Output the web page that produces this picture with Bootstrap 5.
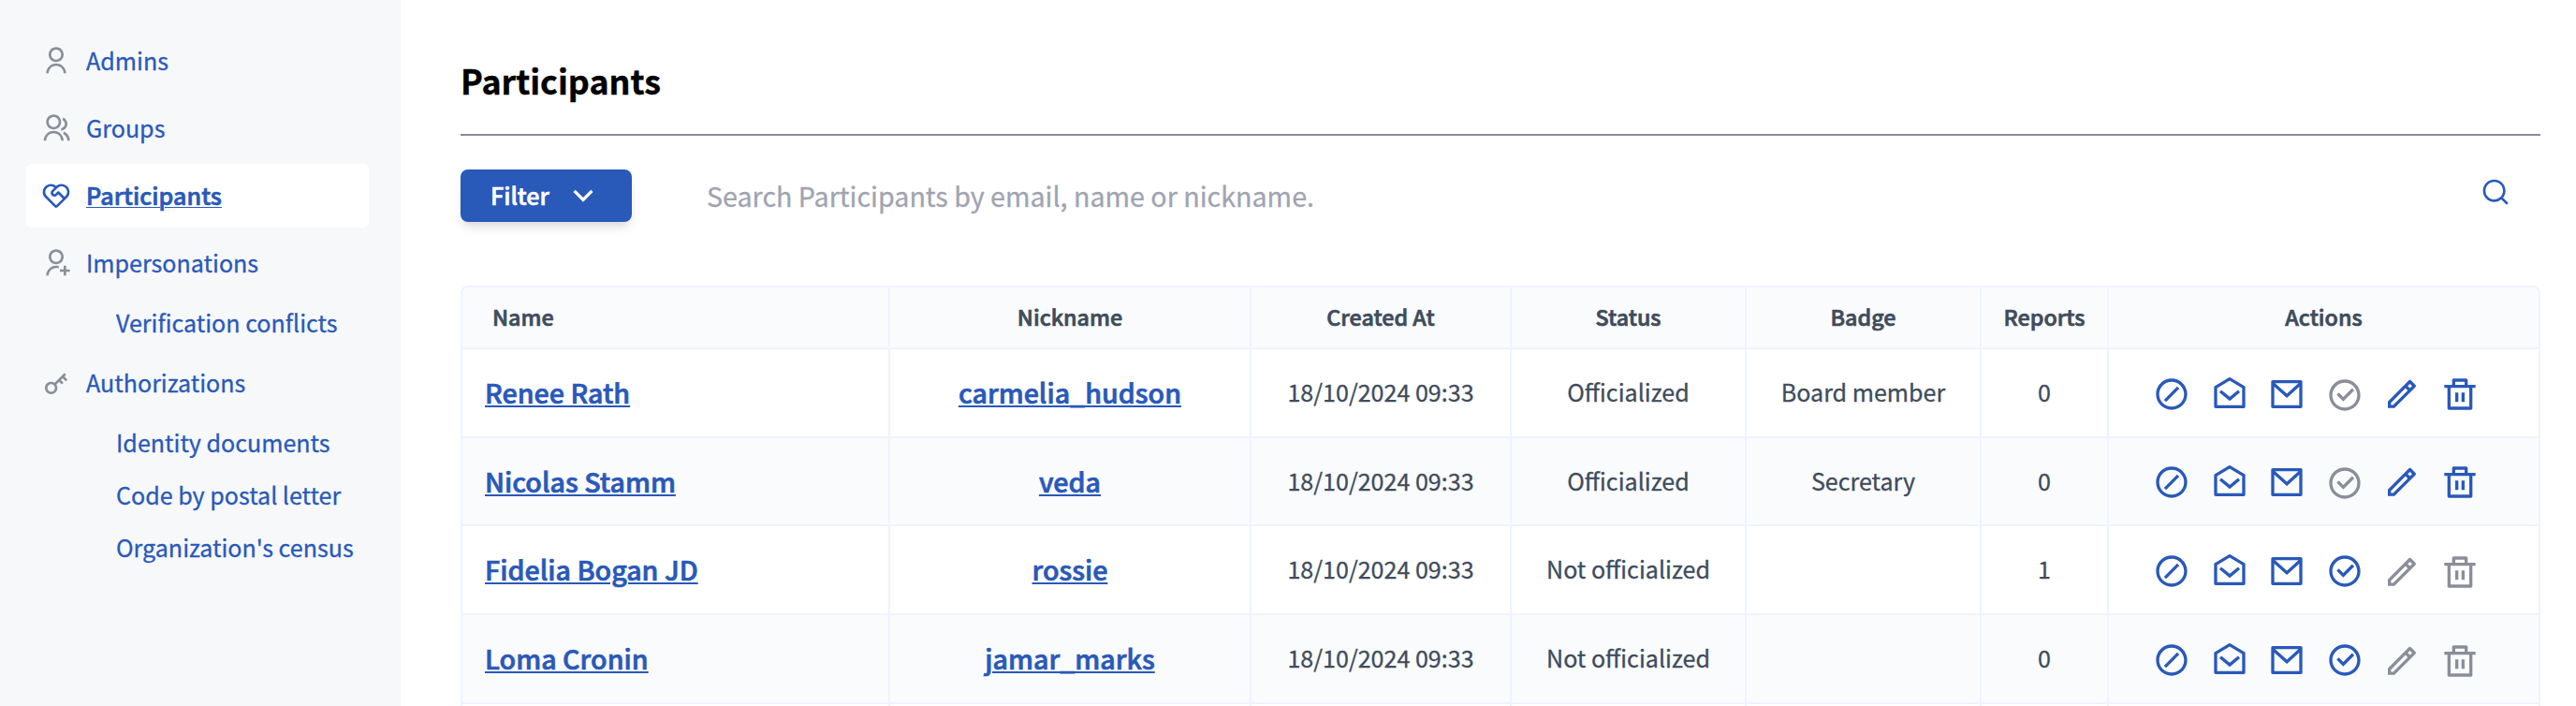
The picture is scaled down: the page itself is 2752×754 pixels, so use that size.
<!DOCTYPE html>
<html lang="en">
<head>
<meta charset="utf-8">
<meta name="viewport" content="width=device-width, initial-scale=1">
<title>Participants</title>
<link rel="stylesheet" href="https://cdn.jsdelivr.net/npm/bootstrap@5.3.0/dist/css/bootstrap.min.css">
<style>
  :root { --primary: #2959b9; --ink: #3e4c5c; --muted: #8a8e99; --line: #eef3ff; --soft: #fafbfd; }
  body { font-family: "Noto Sans CJK SC", "Noto Sans", sans-serif; color: var(--ink); font-size: 25.07px; line-height: 36px; height: 754px; overflow: hidden; -webkit-text-stroke: .3px currentColor; }
  a { color: var(--primary); }
  svg { fill: currentColor; flex: none; -webkit-text-stroke: 0; }
  .sidebar { width: 428px; height: 754px; background: #f7f8fa; padding: 31px 34px 0 28px; }
  .side-link { height: 68px; padding: 0 0 0 16px; gap: 16px; border-radius: 6px; color: var(--primary); text-decoration: none; }
  .side-link span { padding-bottom: 2px; }
  .side-link svg { width: 32px; height: 32px; color: var(--muted); }
  .side-link.active { background: #fff; font-weight: 500; text-decoration: underline; text-decoration-thickness: 1px; text-underline-offset: 2px; letter-spacing: .06px; -webkit-text-stroke-width: .7px; }
  .side-link.active svg { color: var(--primary); }
  .side-sub { height: 56px; padding: 2px 0 0 96px; color: var(--primary); text-decoration: none; white-space: nowrap; }
  main { padding: 0 38px 0 64px; }
  h1 { font-size: 35.8px; font-weight: 700; line-height: 48px; color: #000; padding: 61px 0 34px; margin: 0; border-bottom: 2px solid #868c98; -webkit-text-stroke-width: .4px; }
  .btn-filter { width: 183px; height: 56px; background: var(--primary); color: #fff; border: 0; border-radius: 8px; padding: 0 32px; font-size: 25.07px; font-weight: 500; -webkit-text-stroke: .6px currentColor; box-shadow: 0 8px 12px -2px rgba(0,0,0,.1), 0 4px 8px -4px rgba(0,0,0,.1); }
  .btn-filter span { padding-bottom: 2px; }
  .toolbar { height: 56px; margin-top: 36px; }
  .search-box { margin-left: 48px; border: 0; padding: 3px 32px; font-size: 28.65px; line-height: 40px; -webkit-text-stroke: .3px #9fa4b1; }
  .search-box::placeholder { color: #9fa4b1; opacity: 1; }
  .search-icon { width: 32px; height: 32px; color: var(--primary); margin: -8px 32px 0 0; }
  .people { width: 2222px; margin-top: 68px; border: 2px solid var(--line); border-bottom: 0; border-radius: 8px 8px 0 0; overflow: hidden; }
  .people table { table-layout: fixed; width: 2218px; border-collapse: separate; border-spacing: 0; }
  .people th, .people td { border: 0 solid var(--line); border-width: 0 2px 2px 0; padding: 0; text-align: center; vertical-align: middle; white-space: nowrap; }
  .people th:last-child, .people td:last-child { border-right: 0; }
  .people th { height: 66px; background: var(--soft); font-size: 23.3px; font-weight: 500; -webkit-text-stroke-width: .7px; padding-bottom: 2px; }
  .people td { height: 95px; padding-bottom: 3px; }
  .people td:nth-child(-n+2) { padding-top: 3px; }
  .people tr.mid td { height: 94px; padding-bottom: 2px; }
  .people tbody tr:nth-child(even) td { background: var(--soft); }
  .people tbody tr.next td { height: 2px; padding: 0; border-bottom: 0; }
  .people th:first-child { text-align: left; padding-left: 32px; }
  .people td:first-child { text-align: left; padding-left: 24px; }
  .people td > a { font-size: 28.65px; font-weight: 500; -webkit-text-stroke-width: .7px; text-decoration-thickness: 2px; text-underline-offset: 2px; }
  .acts { gap: 21.6px; color: var(--primary); padding: 6px 0 0 47px; }
  .mid .acts { padding-top: 4px; }
  .acts svg { width: 40px; height: 40px; }
  .acts .off { color: var(--muted); margin: 1px 0 -1px; }
</style>
</head>
<body>
<svg class="d-none">
  <symbol id="user" viewBox="0 0 24 24"><path d="M4 22C4 17.5817 7.58172 14 12 14C16.4183 14 20 17.5817 20 22H18C18 18.6863 15.3137 16 12 16C8.68629 16 6 18.6863 6 22H4ZM12 13C8.685 13 6 10.315 6 7C6 3.685 8.685 1 12 1C15.315 1 18 3.685 18 7C18 10.315 15.315 13 12 13ZM12 11C14.21 11 16 9.21 16 7C16 4.79 14.21 3 12 3C9.79 3 8 4.79 8 7C8 9.21 9.79 11 12 11Z"/></symbol>
  <symbol id="group" viewBox="0 0 24 24"><path d="M2 22C2 17.5817 5.58172 14 10 14C14.4183 14 18 17.5817 18 22H16C16 18.6863 13.3137 16 10 16C6.68629 16 4 18.6863 4 22H2ZM10 13C6.685 13 4 10.315 4 7C4 3.685 6.685 1 10 1C13.315 1 16 3.685 16 7C16 10.315 13.315 13 10 13ZM10 11C12.21 11 14 9.21 14 7C14 4.79 12.21 3 10 3C7.79 3 6 4.79 6 7C6 9.21 7.79 11 10 11ZM18.2837 14.7028C21.0644 15.9561 23 18.752 23 22H21C21 19.564 19.5483 17.4671 17.4628 16.5271L18.2837 14.7028ZM17.5962 3.41321C19.5944 4.23703 21 6.20361 21 8.5C21 11.3702 18.8042 13.7252 16 13.9776V11.9646C17.6967 11.7222 19 10.264 19 8.5C19 7.11935 18.2016 5.92603 17.041 5.35635L17.5962 3.41321Z"/></symbol>
  <symbol id="heart" viewBox="0 0 24 24"><path d="M3.16113 4.46875C5.58508 2.0448 9.44716 1.9355 12.0008 4.14085C14.5528 1.9355 18.4149 2.0448 20.8388 4.46875C23.2584 6.88836 23.3716 10.741 21.1785 13.2947L13.4142 21.0858C12.6686 21.8313 11.4809 21.8652 10.6952 21.1874L10.5858 21.0858L2.82141 13.2947C0.628282 10.741 0.741522 6.88836 3.16113 4.46875ZM4.57534 5.88296C2.86819 7.59011 2.81942 10.3276 4.42902 12.0937L4.57534 12.2469L12 19.6715L17.3026 14.3675L13.7677 10.8327L12.7071 11.8934C11.5355 13.0649 9.636 13.0649 8.46443 11.8934C7.29286 10.7218 7.29286 8.8223 8.46443 7.65073L10.5656 5.54823C8.85292 4.17713 6.37076 4.23993 4.7286 5.73663L4.57534 5.88296ZM13.0606 8.71139C13.4511 8.32086 14.0843 8.32086 14.4748 8.71139L18.7168 12.9533L19.4246 12.2469C21.1819 10.4896 21.1819 7.64032 19.4246 5.88296C17.7174 4.17581 14.9799 4.12704 13.2139 5.73663L13.0606 5.88296L9.87864 9.06494C9.51601 9.42757 9.49011 9.99942 9.80094 10.3919L9.87864 10.4792C10.2413 10.8418 10.8131 10.8677 11.2056 10.5569L11.2929 10.4792L13.0606 8.71139Z"/></symbol>
  <symbol id="user-add" viewBox="0 0 24 24"><path d="M14 14.252V16.3414C13.3744 16.1203 12.7013 16 12 16C8.68629 16 6 18.6863 6 22H4C4 17.5817 7.58172 14 12 14C12.6906 14 13.3608 14.0875 14 14.252ZM12 13C8.685 13 6 10.315 6 7C6 3.685 8.685 1 12 1C15.315 1 18 3.685 18 7C18 10.315 15.315 13 12 13ZM12 11C14.21 11 16 9.21 16 7C16 4.79 14.21 3 12 3C9.79 3 8 4.79 8 7C8 9.21 9.79 11 12 11ZM18 17V14H20V17H23V19H20V22H18V19H15V17H18Z"/></symbol>
  <symbol id="key" viewBox="0 0 24 24"><path d="M10.7577 11.8281L18.6066 3.97919L20.0208 5.3934L18.6066 6.80761L21.0815 9.28249L19.6673 10.6967L17.1924 8.22183L15.7782 9.63604L17.8995 11.7574L16.4853 13.1716L14.364 11.0503L12.1719 13.2423C13.4581 15.1837 13.246 17.8251 11.5355 19.5355C9.58291 21.4882 6.41709 21.4882 4.46447 19.5355C2.51184 17.5829 2.51184 14.4171 4.46447 12.4645C6.17493 10.754 8.81633 10.5419 10.7577 11.8281ZM10.1213 18.1213C11.2929 16.9497 11.2929 15.0503 10.1213 13.8787C8.94975 12.7071 7.05025 12.7071 5.87868 13.8787C4.70711 15.0503 4.70711 16.9497 5.87868 18.1213C7.05025 19.2929 8.94975 19.2929 10.1213 18.1213Z"/></symbol>
  <symbol id="chevron" viewBox="0 0 24 24"><path d="M11.9999 13.1714L16.9497 8.22168L18.3639 9.63589L11.9999 15.9999L5.63599 9.63589L7.0502 8.22168L11.9999 13.1714Z"/></symbol>
  <symbol id="search" viewBox="0 0 24 24"><path d="M18.031 16.6168L22.3137 20.8995L20.8995 22.3137L16.6168 18.031C15.0769 19.263 13.124 20 11 20C6.032 20 2 15.968 2 11C2 6.032 6.032 2 11 2C15.968 2 20 6.032 20 11C20 13.124 19.263 15.0769 18.031 16.6168ZM16.0247 15.8748C17.2475 14.6146 18 12.8956 18 11C18 7.1325 14.8675 4 11 4C7.1325 4 4 7.1325 4 11C4 14.8675 7.1325 18 11 18C12.8956 18 14.6146 17.2475 15.8748 16.0247L16.0247 15.8748Z"/></symbol>
  <symbol id="forbid" viewBox="0 0 24 24"><path d="M12 22C6.47715 22 2 17.5228 2 12C2 6.47715 6.47715 2 12 2C17.5228 2 22 6.47715 22 12C22 17.5228 17.5228 22 12 22ZM12 20C16.4183 20 20 16.4183 20 12C20 7.58172 16.4183 4 12 4C7.58172 4 4 7.58172 4 12C4 16.4183 7.58172 20 12 20ZM15.5355 7.05025L16.9497 8.46447L8.46447 16.9497L7.05025 15.5355L15.5355 7.05025Z"/></symbol>
  <symbol id="mail-open" viewBox="0 0 24 24"><path d="M2.24283 6.85419L11.4895 1.30775C11.8062 1.11774 12.2019 1.11789 12.5185 1.30815L21.7573 6.85435C21.9079 6.94478 22 7.10761 22 7.2834V20C22 20.5523 21.5523 21 21 21H3C2.44772 21 2 20.5523 2 20V7.28322C2 7.10748 2.09212 6.94469 2.24283 6.85419ZM4 8.13261V19H20V8.13214L12.0037 3.33237L4 8.13261ZM12.0597 13.6983L17.3556 9.2346L18.6444 10.7639L12.074 16.3017L5.36401 10.7717L6.63599 9.2283L12.0597 13.6983Z"/></symbol>
  <symbol id="mail" viewBox="0 0 24 24"><path d="M3 3H21C21.5523 3 22 3.44772 22 4V20C22 20.5523 21.5523 21 21 21H3C2.44772 21 2 20.5523 2 20V4C2 3.44772 2.44772 3 3 3ZM20 7.23792L12.0718 14.338L4 7.21594V19H20V7.23792ZM4.51146 5L12.0619 11.662L19.501 5H4.51146Z"/></symbol>
  <symbol id="check" viewBox="0 0 24 24"><path d="M12 22C6.47715 22 2 17.5228 2 12C2 6.47715 6.47715 2 12 2C17.5228 2 22 6.47715 22 12C22 17.5228 17.5228 22 12 22ZM12 20C16.4183 20 20 16.4183 20 12C20 7.58172 16.4183 4 12 4C7.58172 4 4 7.58172 4 12C4 16.4183 7.58172 20 12 20ZM11.0026 16L6.75999 11.7574L8.17421 10.3431L11.0026 13.1716L16.6595 7.51472L18.0737 8.92893L11.0026 16Z"/></symbol>
  <symbol id="pencil" viewBox="0 0 24 24"><path d="M15.7279 9.57627L14.3137 8.16206L5 17.4758V18.89H6.41421L15.7279 9.57627ZM17.1421 8.16206L18.5563 6.74785L17.1421 5.33363L15.7279 6.74785L17.1421 8.16206ZM7.24264 20.89H3V16.6473L16.435 3.21231C16.8256 2.82179 17.4587 2.82179 17.8492 3.21231L20.6777 6.04074C21.0682 6.43126 21.0682 7.06443 20.6777 7.45495L7.24264 20.89Z"/></symbol>
  <symbol id="bin" viewBox="0 0 24 24"><path d="M17 6H22V8H20V21C20 21.5523 19.5523 22 19 22H5C4.44772 22 4 21.5523 4 21V8H2V6H7V3C7 2.44772 7.44772 2 8 2H16C16.5523 2 17 2.44772 17 3V6ZM18 8H6V20H18V8ZM9 11H11V17H9V11ZM13 11H15V17H13V11ZM9 4V6H15V4H9Z"/></symbol>
</svg>

<div class="d-flex">
  <nav class="sidebar flex-shrink-0">
    <div class="d-flex flex-column gap-1">
      <a class="side-link d-flex align-items-center" href="#"><svg><use href="#user"/></svg><span>Admins</span></a>
      <a class="side-link d-flex align-items-center" href="#"><svg><use href="#group"/></svg><span>Groups</span></a>
      <a class="side-link active d-flex align-items-center" href="#"><svg><use href="#heart"/></svg><span>Participants</span></a>
      <a class="side-link d-flex align-items-center" href="#"><svg><use href="#user-add"/></svg><span>Impersonations</span></a>
    </div>
    <a class="side-sub d-flex align-items-center" href="#">Verification conflicts</a>
    <a class="side-link d-flex align-items-center mt-1" href="#"><svg><use href="#key"/></svg><span>Authorizations</span></a>
    <a class="side-sub d-flex align-items-center" href="#">Identity documents</a>
    <a class="side-sub d-flex align-items-center" href="#">Code by postal letter</a>
    <a class="side-sub d-flex align-items-center" href="#">Organization's census</a>
  </nav>

  <main class="flex-grow-1">
    <h1>Participants</h1>
    <div class="toolbar d-flex align-items-center">
      <button class="btn-filter d-flex align-items-center justify-content-between flex-shrink-0" type="button"><span>Filter</span><svg width="40" height="40"><use href="#chevron"/></svg></button>
      <input class="search-box flex-grow-1" type="text" placeholder="Search Participants by email, name or nickname.">
      <svg class="search-icon"><use href="#search"/></svg>
    </div>

    <div class="people">
      <table>
        <colgroup><col style="width:457px"><col style="width:386px"><col style="width:278px"><col style="width:251px"><col style="width:251px"><col style="width:136px"><col></colgroup>
        <thead><tr><th>Name</th><th>Nickname</th><th>Created At</th><th>Status</th><th>Badge</th><th>Reports</th><th>Actions</th></tr></thead>
        <tbody>
          <tr>
            <td><a href="#">Renee Rath</a></td><td><a href="#">carmelia_hudson</a></td><td>18/10/2024 09:33</td><td>Officialized</td><td>Board member</td><td>0</td>
            <td><div class="acts d-flex"><svg><use href="#forbid"/></svg><svg><use href="#mail-open"/></svg><svg><use href="#mail"/></svg><svg class="off"><use href="#check"/></svg><svg><use href="#pencil"/></svg><svg><use href="#bin"/></svg></div></td>
          </tr>
          <tr class="mid">
            <td><a href="#">Nicolas Stamm</a></td><td><a href="#">veda</a></td><td>18/10/2024 09:33</td><td>Officialized</td><td>Secretary</td><td>0</td>
            <td><div class="acts d-flex"><svg><use href="#forbid"/></svg><svg><use href="#mail-open"/></svg><svg><use href="#mail"/></svg><svg class="off"><use href="#check"/></svg><svg><use href="#pencil"/></svg><svg><use href="#bin"/></svg></div></td>
          </tr>
          <tr>
            <td><a href="#">Fidelia Bogan JD</a></td><td><a href="#">rossie</a></td><td>18/10/2024 09:33</td><td>Not officialized</td><td></td><td>1</td>
            <td><div class="acts d-flex"><svg><use href="#forbid"/></svg><svg><use href="#mail-open"/></svg><svg><use href="#mail"/></svg><svg><use href="#check"/></svg><svg class="off"><use href="#pencil"/></svg><svg class="off"><use href="#bin"/></svg></div></td>
          </tr>
          <tr>
            <td><a href="#">Loma Cronin</a></td><td><a href="#">jamar_marks</a></td><td>18/10/2024 09:33</td><td>Not officialized</td><td></td><td>0</td>
            <td><div class="acts d-flex"><svg><use href="#forbid"/></svg><svg><use href="#mail-open"/></svg><svg><use href="#mail"/></svg><svg><use href="#check"/></svg><svg class="off"><use href="#pencil"/></svg><svg class="off"><use href="#bin"/></svg></div></td>
          </tr>
          <tr class="next"><td></td><td></td><td></td><td></td><td></td><td></td><td></td></tr>
        </tbody>
      </table>
    </div>
  </main>
</div>
<script src="https://cdn.jsdelivr.net/npm/bootstrap@5.3.0/dist/js/bootstrap.bundle.min.js"></script>
</body>
</html>
